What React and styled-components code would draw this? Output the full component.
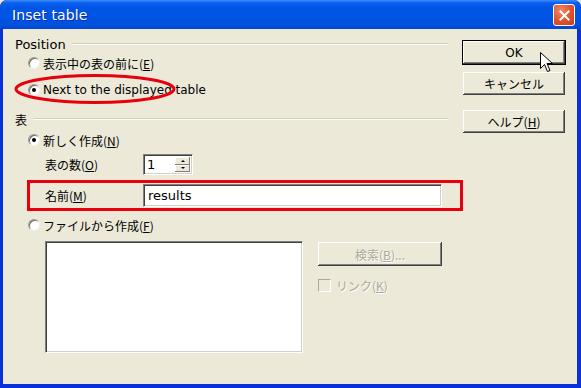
import React from "react";
import styled, { createGlobalStyle } from "styled-components";

const Global = createGlobalStyle`
  html, body { margin: 0; padding: 0; background: #ece9d8; }
  body { width: 581px; height: 388px; overflow: hidden; }
`;

const jp = `"Noto Sans CJK JP", "DejaVu Sans", sans-serif`;
const latin = `"DejaVu Sans", "Noto Sans CJK JP", sans-serif`;

const Window = styled.div`
  position: relative;
  width: 581px;
  height: 388px;
  box-sizing: border-box;
  display: flex;
  flex-direction: column;
  background: #0831d9;
  border-radius: 7px 7px 0 0;
  padding: 0 4px 4px 3px;
  font-family: ${jp};
  font-size: 12px;
  color: #000;
`;

const TitleBar = styled.div`
  height: 29px;
  margin: 0 -4px 0 -3px;
  display: flex;
  align-items: center;
  justify-content: space-between;
  padding: 0 6px 0 12px;
  border-radius: 7px 7px 0 0;
  background: linear-gradient(
    to bottom,
    #3c8cf8 0px,
    #0a5ef0 3px,
    #0055e5 8px,
    #0054e3 18px,
    #0150de 25px,
    #0047d0 29px
  );
`;

const Title = styled.span`
  font-family: ${latin};
  font-size: 14px;
  color: #fff;
  letter-spacing: 0.1px;
  text-shadow: 1px 1px 0 #0a2fa8;
`;

const CloseButton = styled.div`
  width: 20px;
  height: 20px;
  margin-top: 1px;
  border: 1px solid #fff;
  border-radius: 3px;
  background: radial-gradient(circle at 35% 30%, #f08a6a 0%, #e0502c 55%, #c83c1c 100%);
  display: flex;
  align-items: center;
  justify-content: center;
`;

const Body = styled.div`
  flex: 1;
  display: flex;
  background: #ece9d8;
  padding: 7px 11px 0 12px;
`;

const MainColumn = styled.div`
  width: 433px;
  display: flex;
  flex-direction: column;
`;

const GroupHeader = styled.div`
  height: 16px;
  display: flex;
  align-items: center;
  gap: 6px;
  margin-top: ${(p) => p.$top || 0}px;
  font-family: ${(p) => (p.$latin ? latin : jp)};
  font-size: ${(p) => (p.$latin ? "13px" : "12px")};
  &::after {
    content: "";
    flex: 1;
    height: 0;
    border-top: 1px solid #d0d0bf;
    border-bottom: 1px solid #fff;
  }
`;

const RadioRow = styled.label`
  position: relative;
  height: 18px;
  display: flex;
  align-items: center;
  gap: 3px;
  margin-top: ${(p) => p.$top || 0}px;
  padding-left: 13px;
  font-family: ${(p) => (p.$latin ? latin : jp)};
  font-size: 12px;
  white-space: nowrap;
`;

const Radio = styled.span`
  flex-shrink: 0;
  box-sizing: border-box;
  width: 12px;
  height: 12px;
  border-radius: 50%;
  background: #fff;
  border: 1px solid;
  border-color: #9d9d92 #f2f1ea #f2f1ea #9d9d92;
  box-shadow: inset 1px 1px 0 #6e6e66;
  display: flex;
  align-items: center;
  justify-content: center;
  &::after {
    content: "";
    width: 4px;
    height: 4px;
    border-radius: 50%;
    background: ${(p) => (p.$on ? "#000" : "transparent")};
  }
`;

const Ellipse = styled.svg`
  position: absolute;
  left: -4px;
  top: -9px;
  overflow: visible;
  pointer-events: none;
`;

const FieldRow = styled.div`
  position: relative;
  display: flex;
  align-items: center;
  margin-top: ${(p) => p.$top || 0}px;
  height: ${(p) => p.$h}px;
  padding-left: 30px;
`;

const FieldLabel = styled.span`
  width: 98px;
  white-space: nowrap;
`;

const Sunken = styled.div`
  box-sizing: border-box;
  background: #fff;
  border-top: 1px solid #808080;
  border-left: 1px solid #808080;
  border-right: 1px solid #fff;
  border-bottom: 1px solid #fff;
  box-shadow: inset 1px 1px 0 #404040, inset -1px -1px 0 #d4d0c8;
`;

const TextBox = styled(Sunken)`
  width: ${(p) => p.$w}px;
  height: ${(p) => p.$h}px;
  padding: 0 4px;
  display: flex;
  align-items: center;
  font-family: ${latin};
  font-size: 13px;
`;

const Spinner = styled(Sunken)`
  display: flex;
  width: 50px;
  height: 21px;
  padding: 2px 2px 2px 3px;
`;

const SpinValue = styled.span`
  flex: 1;
  font-family: ${latin};
  font-size: 13px;
  line-height: 16px;
`;

const SpinButtons = styled.div`
  width: 15px;
  display: flex;
  flex-direction: column;
`;

const SpinButton = styled.div`
  flex: 1;
  background: #ece9d8;
  box-shadow: inset -1px -1px 0 #808080, inset 1px 1px 0 #fff;
  display: flex;
  align-items: center;
  justify-content: center;
  &::after {
    content: "";
    border-left: 2px solid transparent;
    border-right: 2px solid transparent;
    ${(p) =>
      p.$up ? "border-bottom: 2px solid #000;" : "border-top: 2px solid #000;"}
  }
`;

const RedBox = styled.div`
  position: absolute;
  left: 12px;
  top: 0;
  width: 436px;
  height: 31px;
  box-sizing: border-box;
  border: 3px solid #e8000c;
  pointer-events: none;
`;

const FileArea = styled.div`
  display: flex;
  gap: 14px;
  margin-top: 7px;
  padding-left: 30px;
`;

const ListBox = styled(Sunken)`
  width: 258px;
  height: 112px;
`;

const SideColumn = styled.div`
  display: flex;
  flex-direction: column;
`;

const Button = styled.div`
  box-sizing: border-box;
  width: ${(p) => p.$w || 104}px;
  height: ${(p) => p.$h || 25}px;
  margin-top: ${(p) => p.$top || 0}px;
  display: flex;
  align-items: center;
  justify-content: center;
  background: #ece9d8;
  border: 1px solid ${(p) => (p.$default ? "#000" : "transparent")};
  box-shadow: inset -1px -1px 0 #404040, inset 1px 1px 0 #fff,
    inset -2px -2px 0 #808080;
  color: ${(p) => (p.$disabled ? "#aca899" : "#000")};
  text-shadow: ${(p) => (p.$disabled ? "1px 1px 0 #fff" : "none")};
  font-family: ${(p) => (p.$latin ? latin : jp)};
  font-size: 12px;
  white-space: nowrap;
`;

const CheckRow = styled.div`
  display: flex;
  align-items: center;
  gap: 5px;
  margin-top: 10px;
  padding-left: 1px;
  color: #aca899;
  text-shadow: 1px 1px 0 #fff;
`;

const CheckBox = styled.span`
  width: 11px;
  height: 11px;
  border-top: 1px solid #aca899;
  border-left: 1px solid #aca899;
  border-right: 1px solid #fff;
  border-bottom: 1px solid #fff;
`;

const ButtonColumn = styled.div`
  display: flex;
  flex-direction: column;
  margin-left: 14px;
  padding-top: 4px;
`;

const Cursor = styled.svg`
  position: absolute;
  left: 540px;
  top: 52px;
`;

const Key = ({ k }) => (
  <span>
    (<u>{k}</u>)
  </span>
);

export default function App() {
  return (
    <>
      <Global />
      <Window>
        <TitleBar>
          <Title>Inset table</Title>
          <CloseButton>
            <svg width="11" height="11" viewBox="0 0 11 11">
              <path
                d="M1.5 1.5 L9.5 9.5 M9.5 1.5 L1.5 9.5"
                stroke="#fff"
                strokeWidth="2"
                strokeLinecap="square"
              />
            </svg>
          </CloseButton>
        </TitleBar>
        <Body>
          <MainColumn>
            <GroupHeader $latin>Position</GroupHeader>
            <RadioRow $top={2}>
              <Radio />
              <span>
                表示中の表の前に<Key k="E" />
              </span>
            </RadioRow>
            <RadioRow $top={9} $latin>
              <Radio $on />
              <span>Next to the displayed table</span>
              <Ellipse width="166" height="34">
                <ellipse
                  cx="84"
                  cy="17"
                  rx="79"
                  ry="13.5"
                  fill="none"
                  stroke="#e8000c"
                  strokeWidth="3"
                />
              </Ellipse>
            </RadioRow>
            <GroupHeader $top={12}>表</GroupHeader>
            <RadioRow $top={4}>
              <Radio $on />
              <span>
                新しく作成<Key k="N" />
              </span>
            </RadioRow>
            <FieldRow $top={5} $h={21}>
              <FieldLabel>
                表の数<Key k="O" />
              </FieldLabel>
              <Spinner>
                <SpinValue>1</SpinValue>
                <SpinButtons>
                  <SpinButton $up />
                  <SpinButton />
                </SpinButtons>
              </Spinner>
            </FieldRow>
            <FieldRow $top={5} $h={31}>
              <FieldLabel>
                名前<Key k="M" />
              </FieldLabel>
              <TextBox $w={299} $h={23}>
                results
              </TextBox>
              <RedBox />
            </FieldRow>
            <RadioRow $top={5}>
              <Radio />
              <span>
                ファイルから作成<Key k="F" />
              </span>
            </RadioRow>
            <FileArea>
              <ListBox />
              <SideColumn>
                <Button $w={126} $h={26} $disabled>
                  検索<Key k="B" />...
                </Button>
                <CheckRow>
                  <CheckBox />
                  <span>
                    リンク<Key k="K" />
                  </span>
                </CheckRow>
              </SideColumn>
            </FileArea>
          </MainColumn>
          <ButtonColumn>
            <Button $default $latin>
              OK
            </Button>
            <Button $top={6}>キャンセル</Button>
            <Button $top={13}>
              ヘルプ<Key k="H" />
            </Button>
          </ButtonColumn>
        </Body>
        <Cursor width="14" height="22" viewBox="0 0 14 22">
          <path
            d="M0.5 0.5 L0.5 16.5 L4.5 12.5 L7.5 19.5 L10 18.5 L7 11.5 L12.5 11.5 Z"
            fill="#fff"
            stroke="#000"
            strokeWidth="1"
          />
        </Cursor>
      </Window>
    </>
  );
}
